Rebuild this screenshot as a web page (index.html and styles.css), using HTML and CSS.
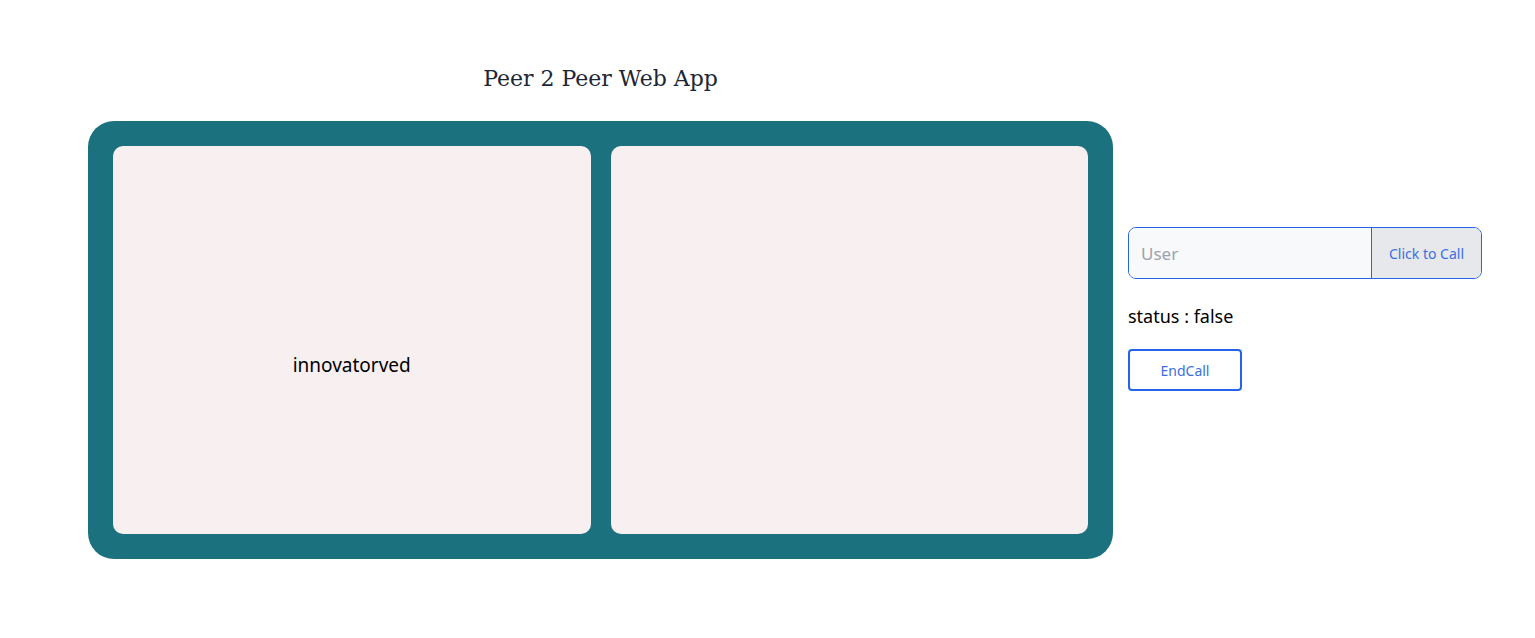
FILE: index.html
```html
<!DOCTYPE html>
<html>
<head>
  <title>Peer 2 Peer Web App</title>
  <meta name="viewport" content="width=device-width, initial-scale=1">
  <link rel="stylesheet" href="styles.css">
</head>
<body>
<div class="app">
  <div class="left">
    <h1 class="title">Peer 2 Peer Web App</h1>
    <div class="call-box">
      <div class="video-panel">
        <div class="video-name">innovatorved</div>
      </div>
      <div class="video-panel"></div>
    </div>
  </div>

  <div class="right">
    <div class="input-group">
      <input type="text" id="user" placeholder="User">
      <button class="call-btn">Click to Call</button>
    </div>
    <p class="status">status : false</p>
    <button class="end-btn">EndCall</button>
  </div>
</div>
</body>
</html>
```

FILE: styles.css
```css
body { margin: 0; font-family: "Noto Sans", "Open Sans", sans-serif; background: #fff; color: #000; }

.app { display: flex; gap: 15px; padding: 0 53px 0 88px; }
.left { width: 1025px; }

.title {
  margin: 66px 0 0;
  height: 55px;
  text-align: center;
  font-family: "DejaVu Serif", "Liberation Serif", serif;
  font-weight: normal;
  font-size: 22px;
  color: #1c2636;
}

.call-box {
  display: grid;
  grid-template-columns: 1fr 1fr;
  gap: 20px;
  padding: 25px;
  height: 388px;
  background: #1b727e;
  border-radius: 26px;
}

.video-panel {
  display: flex;
  align-items: center;
  justify-content: center;
  background: #f7eff0;
  border-radius: 10px;
}
.video-name { margin-top: 50px; font-size: 19px; }

.right { width: 354px; padding-top: 227px; }

.input-group {
  display: flex;
  height: 50px;
  border: 1px solid #2563eb;
  border-radius: 8px;
  overflow: hidden;
}
.input-group input {
  flex: 1;
  min-width: 0;
  border: none;
  padding: 0 12px;
  font-family: inherit;
  font-size: 17px;
  background: #f8f9fb;
  outline: none;
}
.input-group input::placeholder { color: #9ca3af; }
.call-btn {
  width: 110px;
  border: none;
  border-left: 1px solid #2563eb;
  background: #e7e8eb;
  color: #3b6fe0;
  font-family: inherit;
  font-size: 14px;
}

.status { margin: 24px 0 20px; font-size: 18px; line-height: 26px; }

.end-btn {
  width: 114px;
  height: 42px;
  border: 2px solid #2563eb;
  border-radius: 4px;
  background: #fff;
  color: #3b6fe0;
  font-family: inherit;
  font-size: 14px;
}
```
